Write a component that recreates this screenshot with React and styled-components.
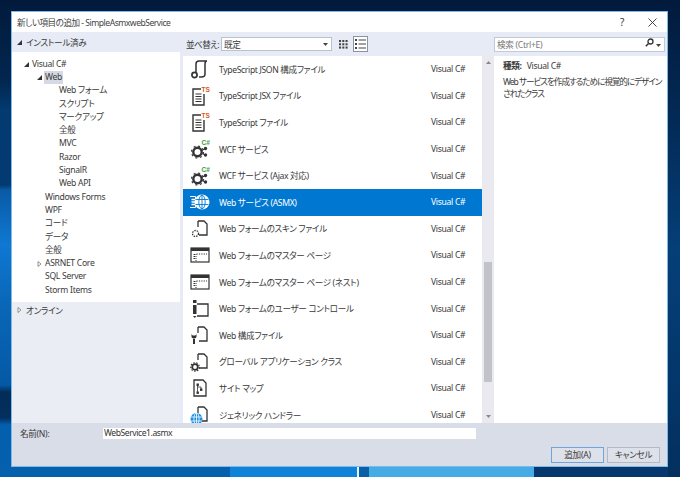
import React from "react";
import styled, { createGlobalStyle } from "styled-components";

const Global = createGlobalStyle`
  html, body { margin: 0; padding: 0; height: 100%; }
  body {
    width: 680px; height: 477px; overflow: hidden;
    font-family: "Noto Sans", "Noto Sans CJK JP", sans-serif;
    font-size: 8.6px; letter-spacing: -0.3px; font-feature-settings: "palt"; color: #3a3a3a;
  }
  #root { height: 100%; }
`;

const Desktop = styled.div`
  width: 680px; height: 477px; box-sizing: border-box; padding: 11px 12px 10px 11px;
  background:
    linear-gradient(180deg, #021a3c 0, #032a56 120px, #053f78 250px, #043a70 330px, #03305f 477px) 100% 0 / 12px 100% no-repeat,
    linear-gradient(90deg, #0560ad 0 230px, #0f82da 230px 357px, #e6f3fb 357px 359px, #0a5fa9 359px 369px, #46ace6 369px 534px, #06386f 534px 100%) 0 466px / 100% 11px no-repeat,
    linear-gradient(180deg, #021a3c 0, #02264f 80px, #033a70 110px, #043a72 185px, #0a5aa6 190px, #0f78d2 245px, #0a68b8 300px, #0459a6 385px, #032c58 392px, #03305e 418px, #0460ae 425px, #0560b0 477px);
`;

const Dialog = styled.div`
  height: 100%; box-sizing: border-box; border: 1px solid #7fb9e6;
  background: #fff; display: flex; flex-direction: column;
`;

const TitleBar = styled.div`
  height: 20px; flex: none; display: flex; align-items: center; padding: 0 0 0 5px; color: #444;
`;
const TitleText = styled.div` flex: 1; letter-spacing: -0.5px; `;
const TitleBtn = styled.div`
  width: ${p => p.$w}px; display: flex; justify-content: center; font-size: 10px; color: #333;
`;

const Body = styled.div` flex: 1; display: flex; min-height: 0; background: #e6ebf5; `;

const Side = styled.aside`
  width: 168px; flex: none; margin-right: 3px; display: flex; flex-direction: column; background: #eaedf4;
`;
const SideHead = styled.div`
  height: ${p => p.$h}px; flex: none; display: flex; align-items: center; gap: 4px; padding-left: 5px;
  background: ${p => p.$bg || "transparent"};
`;
const Tree = styled.div`
  height: 250px; flex: none; box-sizing: border-box; padding-top: 5.500px; background: #fff;
`;
const TreeRow = styled.div`
  height: 13.3px; display: flex; align-items: center; padding-left: ${p => p.$indent}px;
`;
const Twist = styled.span`
  width: 7px; flex: none; display: flex; align-items: center;
`;
const TreeLabel = styled.span`
  padding: 0 1px; line-height: 13px; background: ${p => (p.$sel ? "#d6d9e3" : "transparent")};
`;

const Center = styled.div` width: 311px; flex: none; display: flex; flex-direction: column; `;
const Toolbar = styled.div`
  height: 24px; flex: none; display: flex; align-items: center; padding: 0 0 0 3px;
`;
const SortLabel = styled.span` width: 35px; flex: none; white-space: nowrap; letter-spacing: -0.6px; `;
const Select = styled.div`
  width: 111px; height: 14px; box-sizing: border-box; border: 1px solid #b9c0ce; background: #fff;
  display: flex; align-items: center; justify-content: space-between; padding: 0 3px 0 2px;
`;
const ViewBtn = styled.div`
  width: ${p => p.$w}px; height: 16px; margin-left: ${p => p.$ml}px; box-sizing: border-box;
  display: flex; align-items: center; justify-content: center;
  border: 1px solid ${p => (p.$on ? "#8a94a5" : "transparent")}; background: ${p => (p.$on ? "#fff" : "transparent")};
`;
const ListWrap = styled.div` flex: 1; display: flex; min-height: 0; background: #fff; `;
const List = styled.div` width: 299px; flex: none; overflow: hidden; `;
const Row = styled.div`
  height: 26.6px; display: flex; align-items: center; box-sizing: border-box; padding-left: 7px;
  background: ${p => (p.$sel ? "#0078d2" : "#fff")}; color: ${p => (p.$sel ? "#fff" : "#3a3a3a")};
`;
const RowIcon = styled.div` width: 20px; height: 20px; flex: none; margin-right: 9px; `;
const RowName = styled.div` width: 212px; flex: none; white-space: nowrap; letter-spacing: -0.35px; `;
const RowLang = styled.div` flex: none; `;

const Scroll = styled.div`
  width: 12px; flex: none; display: flex; flex-direction: column; align-items: center; background: #e9e9ef;
`;
const ScrollArrow = styled.div` height: 12px; flex: none; display: flex; align-items: center; `;
const ScrollGap = styled.div` height: ${p => p.$h}px; flex: none; `;
const Thumb = styled.div` width: 8px; height: 120px; flex: none; background: #c2c3c9; `;

const Details = styled.div` flex: 1; display: flex; flex-direction: column; `;
const SearchBand = styled.div` height: 24px; flex: none; display: flex; align-items: center; padding: 0 2px 0 0; `;
const Search = styled.div`
  flex: 1; height: 15px; box-sizing: border-box; border: 1px solid #c3c9d6; background: #fff;
  display: flex; align-items: center; justify-content: space-between; padding: 0 3px 0 2px; color: #777;
`;
const Info = styled.div`
  flex: 1; background: #fff; padding: 4px 4px 0 9px; line-height: 12px;
  letter-spacing: -1.05px; white-space: nowrap;
`;
const InfoHead = styled.div` margin-bottom: 4px; letter-spacing: -0.3px; `;
const InfoKey = styled.span` font-weight: 700; margin-right: 5px; `;

const Footer = styled.div`
  height: 43.500px; flex: none; box-sizing: border-box; background: #d8dde7;
  display: flex; flex-direction: column; padding: 5px 7px 0 8px;
`;
const NameRow = styled.div` display: flex; align-items: center; height: 12px; `;
const NameLabel = styled.label` width: 83px; flex: none; `;
const NameInput = styled.div`
  width: 372px; height: 11px; flex: none; background: #fff; padding-left: 1px; line-height: 11px; color: #333; letter-spacing: -0.45px;
`;
const Buttons = styled.div` display: flex; justify-content: flex-end; gap: 3px; margin-top: 7px; `;
const Button = styled.div`
  width: 53px; height: 16px; box-sizing: border-box; display: flex; align-items: center; justify-content: center;
  background: #dde1ea; border: 1px solid ${p => (p.$primary ? "#6da6dc" : "#b4b9c3")};
`;

const Tri = ({ open, x = 5 }) =>
  open ? (
    <svg width={x} height="5" viewBox="0 0 5 5"><path d="M0 5L5 0V5Z" fill="#333" /></svg>
  ) : (
    <svg width={x} height="6" viewBox="0 0 5 6"><path d="M1 .5L4 3 1 5.5Z" fill="#fff" stroke="#777" strokeWidth=".8" /></svg>
  );

const K = "#333";
const Doc = ({ children }) => (
  <svg width="20" height="20" viewBox="0 0 20 20" fill="none" overflow="visible">
    <path d="M8 2H14L17 5V16H9" stroke={K} strokeWidth="1.3" />
    <path d="M8 2V8" stroke={K} strokeWidth="1.3" />
    {children}
  </svg>
);
const TsJson = () => (
  <svg width="20" height="20" viewBox="0 0 20 20" fill="none">
    <path d="M6 13V5C6 2.5 8 2 9 2H17C15.5 2 15 3.500 15 5V15C15 17.500 13 18 11.500 18H9" stroke={K} strokeWidth="1.5" />
    <circle cx="4.500" cy="16" r="2.600" stroke={K} strokeWidth="1.700" />
  </svg>
);
const TsFile = () => (
  <svg width="20" height="20" viewBox="0 0 20 20" fill="none">
    <path d="M11 3H3V19H14V8" stroke={K} strokeWidth="1.400" />
    <path d="M5.500 8H11.500M5.500 10.500H11.500M5.500 13H11.500M5.500 15.500H11.500" stroke={K} strokeWidth="1.200" />
    <text x="11.500" y="6" fontSize="6.500" fontWeight="700" letterSpacing="0" fill="#d9571c" fontFamily="Liberation Sans, sans-serif">TS</text>
  </svg>
);
const Wcf = () => (
  <svg width="20" height="20" viewBox="0 0 20 20" fill="none">
    <circle cx="7.500" cy="13" r="4.200" stroke={K} strokeWidth="2.400" />
    <circle cx="7.500" cy="13" r="6" stroke={K} strokeWidth="1.200" strokeDasharray="2 2.700" />
    <circle cx="15.500" cy="9.500" r="1.700" fill={K} />
    <circle cx="15.500" cy="16" r="1.700" fill={K} />
    <path d="M12 11.500L15 9.500M12 14.500L15 16" stroke={K} />
    <text x="11.500" y="6" fontSize="6.500" fontWeight="700" letterSpacing="0" fill="#3a9a3a" fontFamily="Liberation Sans, sans-serif">C#</text>
  </svg>
);
const WebSvc = () => (
  <svg width="20" height="20" viewBox="0 0 20 20" fill="none">
    <path d="M0 4.500H5.500V15.500H0" stroke="#fff" strokeWidth="1" />
    <path d="M1.500 7.500H5M1.500 10H5M1.500 12.500H5" stroke="#fff" strokeWidth="1.300" />
    <circle cx="12" cy="10" r="7.500" fill="#fff" />
    <g stroke="#0078d2" strokeWidth=".9">
      <ellipse cx="12" cy="10" rx="3.200" ry="6.800" />
      <path d="M12 3V17M5.500 7.500H18.500M5.500 12.500H18.500" />
    </g>
  </svg>
);
const Skin = () => (
  <Doc>
    <circle cx="5.500" cy="14.500" r="3" stroke={K} strokeWidth="1.300" strokeDasharray="1.500 1" />
  </Doc>
);
const Master = () => (
  <svg width="20" height="20" viewBox="0 0 20 20" fill="none">
    <rect x="1" y="3" width="18" height="14" stroke={K} strokeWidth="1.200" />
    <rect x="1" y="3" width="18" height="3" fill={K} />
    <path d="M3.500 9.500H5M3.500 11.500H5M3.500 13.500H5" stroke={K} />
    <path d="M6.500 9H17" stroke={K} strokeDasharray="1.200 1.200" />
    <path d="M6 9V16" stroke={K} strokeDasharray="1 1" />
  </svg>
);
const UserCtl = () => (
  <svg width="20" height="20" viewBox="0 0 20 20" fill="none">
    <rect x="3" y="1" width="3.500" height="3" fill={K} />
    <rect x="3" y="6" width="3.500" height="9" fill={K} />
    <path d="M3 17H6.500L4.700 19Z" fill={K} />
    <path d="M7 5H18V17H7" stroke={K} strokeWidth="1.300" />
  </svg>
);
const Config = () => (
  <Doc>
    <path d="M1.500 9V11.500C1.500 13 3 13.500 4 13.500S6.500 13 6.500 11.500V9L5.300 10.500H2.700Z M3 13H5V19H3Z" fill={K} />
  </Doc>
);
const GlobalApp = () => (
  <Doc>
    <circle cx="5" cy="15" r="2.800" stroke={K} strokeWidth="1.800" />
    <circle cx="5" cy="15" r="4.300" stroke={K} strokeWidth="1.100" strokeDasharray="1.500 1.500" />
  </Doc>
);
const SiteMap = () => (
  <svg width="20" height="20" viewBox="0 0 20 20" fill="none">
    <path d="M4 2H13L16 5V18H4Z" stroke={K} strokeWidth="1.300" />
    <path d="M7.500 6.500V9H11V12M7.500 9V14" stroke={K} strokeWidth=".8" />
    <rect x="6.500" y="5.500" width="2.400" height="2.400" fill={K} />
    <rect x="10" y="10.500" width="2.400" height="2.400" fill={K} />
    <rect x="6.500" y="13.500" width="2.400" height="2.400" fill={K} />
  </svg>
);
const Generic = () => (
  <Doc>
    <circle cx="6.500" cy="14" r="6" fill="#1b8fe0" />
    <g stroke="#fff" strokeWidth=".8">
      <ellipse cx="6.500" cy="14" rx="2.600" ry="6" />
      <path d="M6.500 8V20M1 12H12M1 16H12" />
    </g>
  </Doc>
);

const GridIcon = () => (
  <svg width="11" height="11" viewBox="0 0 11 11" fill="#444">
    {[0, 4, 8].flatMap(y => [0, 4, 8].map(x => <rect key={`${x}${y}`} x={x} y={y} width="2.500" height="2.500" />))}
  </svg>
);
const ListIcon = () => (
  <svg width="11" height="10" viewBox="0 0 11 10" fill="#444">
    {[0, 4, 8].map(y => (
      <g key={y}>
        <rect x="0" y={y} width="2" height="2" />
        <rect x="3.500" y={y + 0.5} width="7.500" height="1" />
      </g>
    ))}
  </svg>
);
const Caret = () => (
  <svg width="5" height="3" viewBox="0 0 5 3"><path d="M0 0H5L2.500 3Z" fill="#444" /></svg>
);
const Mag = () => (
  <svg width="9" height="9" viewBox="0 0 9 9" fill="none">
    <circle cx="5.500" cy="3.500" r="2.500" stroke="#333" strokeWidth="1.300" />
    <path d="M3.500 5.500L.8 8.200" stroke="#333" strokeWidth="1.500" />
  </svg>
);
const Close = () => (
  <svg width="9" height="9" viewBox="0 0 9 9"><path d="M.5 .5L8.500 8.500M8.500 .5L.5 8.500" stroke="#333" strokeWidth=".9" /></svg>
);

const tree = [
  { t: "Visual C#", i: 12, tw: "open" },
  { t: "Web", i: 25, tw: "open", sel: true },
  { t: "Web フォーム", i: 46 },
  { t: "スクリプト", i: 46 },
  { t: "マークアップ", i: 46 },
  { t: "全般", i: 46 },
  { t: "MVC", i: 46 },
  { t: "Razor", i: 46 },
  { t: "SignalR", i: 46 },
  { t: "Web API", i: 46 },
  { t: "Windows Forms", i: 32 },
  { t: "WPF", i: 32 },
  { t: "コード", i: 32 },
  { t: "データ", i: 32 },
  { t: "全般", i: 32 },
  { t: "ASRNET Core", i: 25, tw: "closed" },
  { t: "SQL Server", i: 32 },
  { t: "Storm Items", i: 32 },
];

const rows = [
  ["TypeScript JSON 構成ファイル", TsJson],
  ["TypeScript JSX ファイル", TsFile],
  ["TypeScript ファイル", TsFile],
  ["WCF サービス", Wcf],
  ["WCF サービス (Ajax 対応)", Wcf],
  ["Web サービス (ASMX)", WebSvc, true],
  ["Web フォームのスキン ファイル", Skin],
  ["Web フォームのマスター ページ", Master],
  ["Web フォームのマスター ページ (ネスト)", Master],
  ["Web フォームのユーザー コントロール", UserCtl],
  ["Web 構成ファイル", Config],
  ["グローバル アプリケーション クラス", GlobalApp],
  ["サイト マップ", SiteMap],
  ["ジェネリック ハンドラー", Generic],
];

export default function App() {
  return (
    <Desktop>
      <Global />
      <Dialog>
        <TitleBar>
          <TitleText>新しい項目の追加 - SimpleAsmxwebService</TitleText>
          <TitleBtn $w={30}>?</TitleBtn>
          <TitleBtn $w={30}><Close /></TitleBtn>
        </TitleBar>
        <Body>
          <Side>
            <SideHead $h={20} $bg="#e6ebf5"><Tri open />インストール済み</SideHead>
            <Tree>
              {tree.map((n, k) => (
                <TreeRow key={k} $indent={n.i}>
                  {n.tw && <Twist><Tri open={n.tw === "open"} /></Twist>}
                  <TreeLabel $sel={n.sel}>{n.t}</TreeLabel>
                </TreeRow>
              ))}
            </Tree>
            <SideHead $h={16}><Tri />オンライン</SideHead>
          </Side>
          <Center>
            <Toolbar>
              <SortLabel>並べ替え:</SortLabel>
              <Select>既定<Caret /></Select>
              <ViewBtn $w={11} $ml={6}><GridIcon /></ViewBtn>
              <ViewBtn $w={15} $ml={4} $on><ListIcon /></ViewBtn>
            </Toolbar>
            <ListWrap>
              <List>
                {rows.map(([name, Icon, sel]) => (
                  <Row key={name} $sel={sel}>
                    <RowIcon><Icon /></RowIcon>
                    <RowName>{name}</RowName>
                    <RowLang>Visual C#</RowLang>
                  </Row>
                ))}
              </List>
              <Scroll>
                <ScrollArrow><svg width="5" height="3" viewBox="0 0 5 3"><path d="M0 3H5L2.500 0Z" fill="#888" /></svg></ScrollArrow>
                <ScrollGap $h={194} />
                <Thumb />
                <ScrollGap $h={28} />
                <ScrollArrow><svg width="5" height="3" viewBox="0 0 5 3"><path d="M0 0H5L2.500 3Z" fill="#888" /></svg></ScrollArrow>
              </Scroll>
            </ListWrap>
          </Center>
          <Details>
            <SearchBand>
              <Search>検索 (Ctrl+E)<span><Mag /> <Caret /></span></Search>
            </SearchBand>
            <Info>
              <InfoHead><InfoKey>種類:</InfoKey>Visual C#</InfoHead>
              Web サービスを作成するために視覚的にデザイン<br />されたクラス
            </Info>
          </Details>
        </Body>
        <Footer>
          <NameRow>
            <NameLabel>名前(N):</NameLabel>
            <NameInput>WebService1.asmx</NameInput>
          </NameRow>
          <Buttons>
            <Button $primary>追加(A)</Button>
            <Button>キャンセル</Button>
          </Buttons>
        </Footer>
      </Dialog>
    </Desktop>
  );
}
